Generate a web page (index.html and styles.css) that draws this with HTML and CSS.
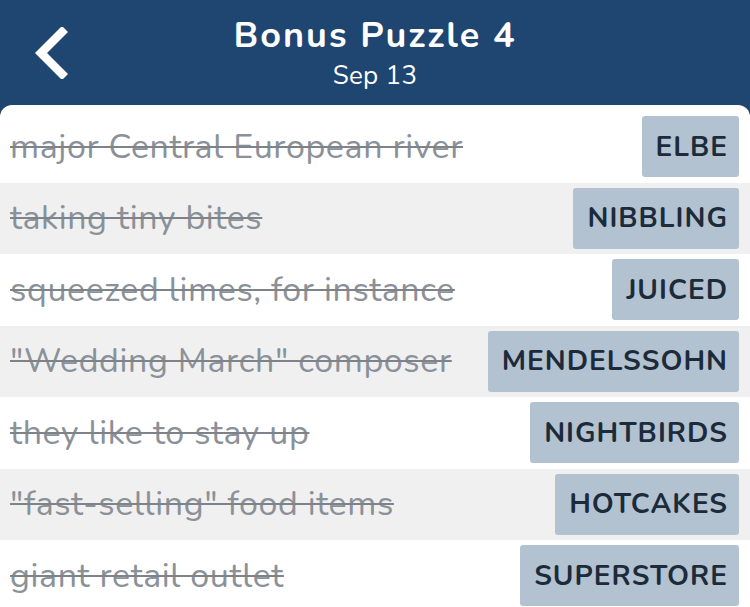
FILE: index.html
```html
<!DOCTYPE html>
<html lang="en">
<head>
  <meta charset="UTF-8">
  <title>Bonus Puzzle 4</title>
  <link rel="stylesheet" href="styles.css">
</head>
<body>

  <!-- Header -->
  <header class="header">
    <a class="header__back" href="#">
      <svg width="36" height="52" viewBox="0 0 36 52">
        <path d="M30 5 L9 26 L30 47" fill="none" stroke="#fff" stroke-width="8.5" stroke-linecap="square"/>
      </svg>
    </a>
    <div class="header__title">Bonus Puzzle 4</div>
    <div class="header__date">Sep 13</div>
  </header>

  <!-- Clues -->
  <ul class="clues">
    <li class="clue"><span class="clue__text">major Central European river</span><span class="clue__answer">ELBE</span></li>
    <li class="clue"><span class="clue__text">taking tiny bites</span><span class="clue__answer">NIBBLING</span></li>
    <li class="clue"><span class="clue__text">squeezed limes, for instance</span><span class="clue__answer">JUICED</span></li>
    <li class="clue"><span class="clue__text">"Wedding March" composer</span><span class="clue__answer">MENDELSSOHN</span></li>
    <li class="clue"><span class="clue__text">they like to stay up</span><span class="clue__answer">NIGHTBIRDS</span></li>
    <li class="clue"><span class="clue__text">"fast-selling" food items</span><span class="clue__answer">HOTCAKES</span></li>
    <li class="clue"><span class="clue__text">giant retail outlet</span><span class="clue__answer">SUPERSTORE</span></li>
  </ul>

</body>
</html>
```
FILE: styles.css
```css
body {
  margin: 0;
  background: #1f4571;
  font-family: "Nunito", "Lato", "Open Sans", sans-serif;
  height: 607px;
  overflow: hidden;
}

/* Header */
.header {
  position: relative;
  height: 105px;
  color: #fff;
  text-align: center;
}

.header__back {
  position: absolute;
  left: 32px;
  top: 27px;
}

.header__title {
  padding-top: 14px;
  font-size: 36px;
  font-weight: bold;
  line-height: 44px;
  letter-spacing: 2px;
}

.header__date {
  font-size: 26px;
  line-height: 32px;
  margin-top: 2px;
  letter-spacing: 0.3px;
}

/* Clue list */
.clues {
  list-style: none;
  margin: 0;
  padding: 6px 0 0;
  background: #fff;
  border-radius: 12px 12px 0 0;
  height: 496px;
}

.clue {
  display: flex;
  align-items: center;
  justify-content: space-between;
  height: 71.5px;
  padding: 0 11px 0 10px;
  box-sizing: border-box;
}

.clue:nth-child(even) {
  background: #f0f0f0;
}

.clue__text {
  font-size: 34px;
  color: #8b9198;
  text-decoration: line-through;
  text-decoration-thickness: 2px;
  text-decoration-color: #7d8389;
  letter-spacing: 0.6px;
  white-space: nowrap;
}

.clue__answer {
  display: flex;
  align-items: center;
  height: 61px;
  padding: 0 11px 0 14px;
  background: #b2c2d0;
  border-radius: 3px;
  color: #1c2a3a;
  font-size: 28px;
  font-weight: bold;
  letter-spacing: 1px;
}
```
